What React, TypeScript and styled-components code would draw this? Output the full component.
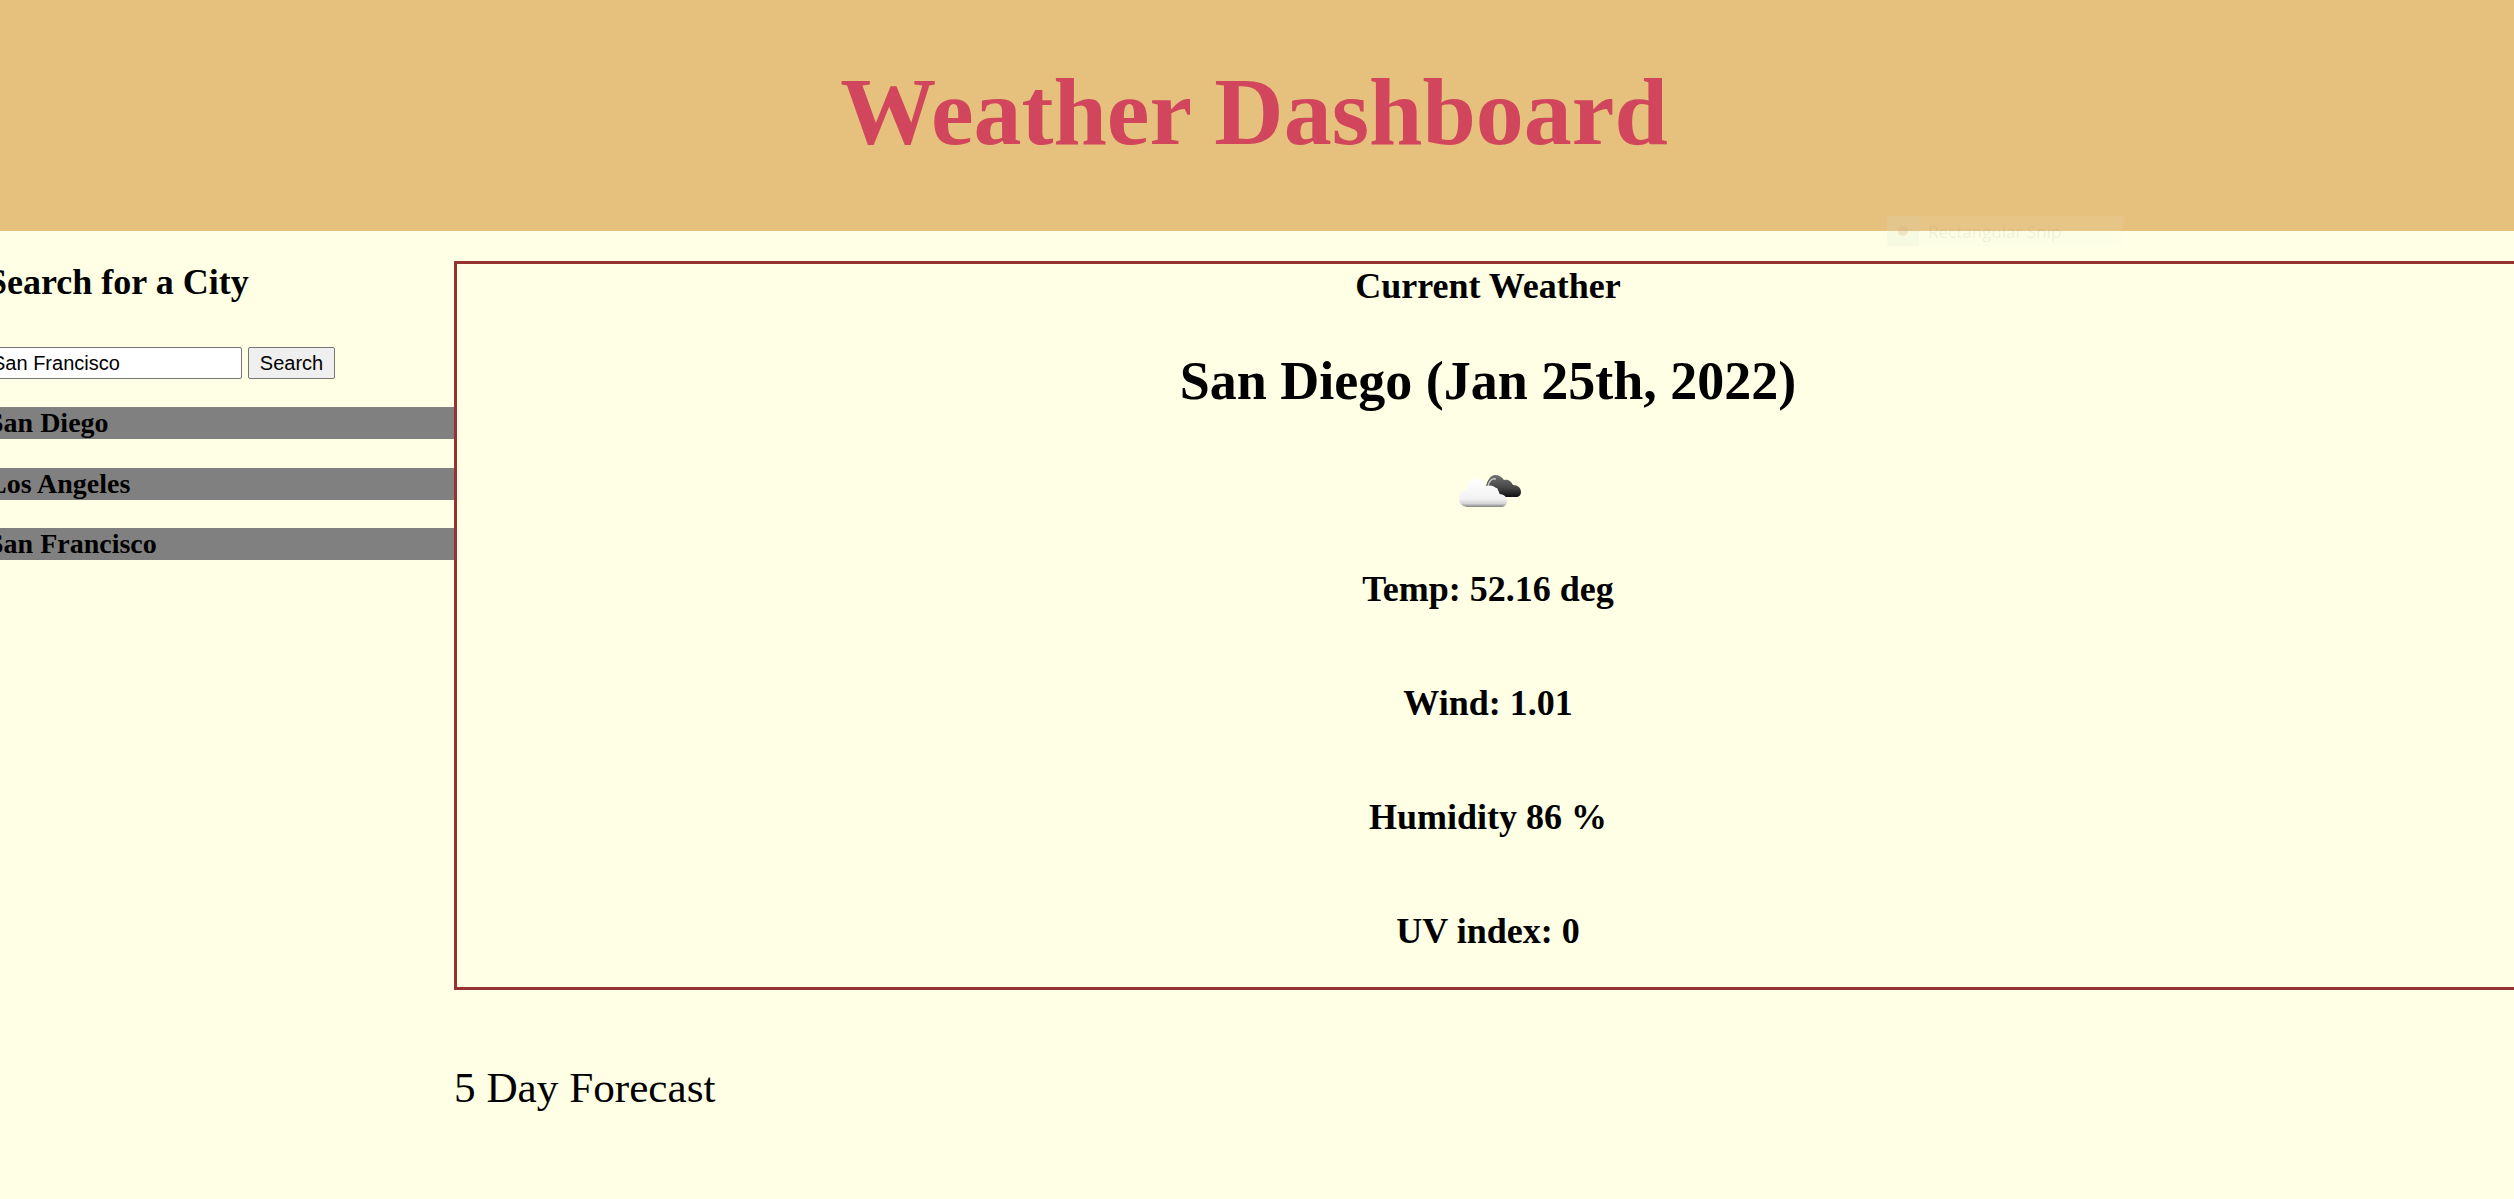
import React from "react";
import styled, { createGlobalStyle } from "styled-components";

const Global = createGlobalStyle`
  html, body { margin: 0; padding: 0; height: 100%; overflow: hidden; background: #feffe4; }
  #root { height: 100%; }
`;
const Page = styled.div`
  position: relative;
  width: 2514px;
  height: 1199px;
  overflow: hidden;
  background: #feffe4;
  font-family: "Liberation Serif", "Times New Roman", serif;
  color: #000;
`;
const Header = styled.header`
  box-sizing: border-box;
  height: 231px;
  padding: 0 6px 8px 0;
  background: #e6c17d;
  display: flex;
  align-items: center;
  justify-content: center;
`;
const Title = styled.h1`
  margin: 0;
  font-size: 96px;
  line-height: 110px;
  font-weight: 700;
  color: #d1465c;
`;
const Body = styled.div`
  display: flex;
  align-items: flex-start;
  width: 2522px;
`;
const Sidebar = styled.aside`
  flex: 0 0 454px;
  box-sizing: border-box;
  padding-top: 31px;
`;
const SearchTitle = styled.h3`
  margin: 0 0 44px -13px;
  font-size: 36px;
  line-height: 41px;
`;
const SearchRow = styled.form`
  display: flex;
  gap: 6px;
  margin: 0 0 28px -12px;
`;
const CityInput = styled.input`
  box-sizing: border-box;
  width: 254px;
  height: 32px;
  padding: 0 3px;
  border: 1px solid #767676;
  border-radius: 2px;
  background: #fff;
  font: 20px "Liberation Sans", Arial, sans-serif;
  color: #000;
  outline: none;
`;
const SearchButton = styled.button`
  box-sizing: border-box;
  width: 87px;
  height: 32px;
  padding: 0;
  border: 1px solid #767676;
  border-radius: 2px;
  background: #efefef;
  font: 20px "Liberation Sans", Arial, sans-serif;
  color: #000;
`;
const CityList = styled.div`
  display: flex;
  flex-direction: column;
  gap: 28.5px;
`;
const CityItem = styled.div`
  height: 32px;
  line-height: 32px;
  background: #808080;
  font-size: 28px;
  font-weight: 700;
  text-indent: -12px;
`;
const Main = styled.main`
  flex: 1;
  min-width: 0;
  padding-top: 30px;
`;
const CurrentCard = styled.section`
  box-sizing: border-box;
  height: 729px;
  padding-top: 2px;
  border: 3px solid #963232;
  display: flex;
  flex-direction: column;
  align-items: center;
  text-align: center;
`;
const CardTitle = styled.h3`
  margin: 0;
  font-size: 36px;
  line-height: 41px;
`;
const CityHeading = styled.h2`
  margin: 43px 0 0;
  font-size: 54px;
  line-height: 62px;
`;
const WeatherIcon = styled.svg`
  display: block;
  margin-top: 63px;
  width: 62px;
  height: 33px;
  transform: translateX(2px);
  filter: blur(0.6px);
`;
const Stat = styled.h3<{ $gap: number }>`
  margin: ${(p) => p.$gap}px 0 0;
  font-size: 36px;
  line-height: 41px;
`;
const ForecastTitle = styled.h2`
  margin: 73px 0 0;
  font-size: 43.2px;
  line-height: 50px;
  font-weight: 400;
`;
const SnipToast = styled.div`
  position: absolute;
  left: 1887px;
  top: 216px;
  width: 236px;
  height: 30px;
  display: flex;
  align-items: center;
  gap: 9px;
  background: rgba(235, 240, 240, 0.09);
  font: 17px "Open Sans", sans-serif;
  color: rgba(120, 120, 100, 0.1);
`;
const SnipIcon = styled.span`
  flex: 0 0 32px;
  height: 30px;
  display: flex;
  align-items: center;
  justify-content: center;
  background: rgba(200, 215, 190, 0.1);
  &::after {
    content: "";
    width: 10px;
    height: 10px;
    border-radius: 50%;
    background: rgba(210, 170, 110, 0.25);
  }
`;

const stats = ["Temp: 52.16 deg", "Wind: 1.01", "Humidity 86 %", "UV index: 0"];

export default function App() {
  return (
    <Page>
      <Global />
      <Header>
        <Title>Weather Dashboard</Title>
      </Header>
      <Body>
        <Sidebar>
          <SearchTitle>Search for a City</SearchTitle>
          <SearchRow onSubmit={(e) => e.preventDefault()}>
            <CityInput defaultValue="San Francisco" />
            <SearchButton type="button">Search</SearchButton>
          </SearchRow>
          <CityList>
            <CityItem>San Diego</CityItem>
            <CityItem>Los Angeles</CityItem>
            <CityItem>San Francisco</CityItem>
          </CityList>
        </Sidebar>
        <Main>
          <CurrentCard>
            <CardTitle>Current Weather</CardTitle>
            <CityHeading>San Diego (Jan 25th, 2022)</CityHeading>
            <WeatherIcon viewBox="0 0 62 33" aria-hidden="true">
              <defs>
                <linearGradient id="front" x1="0" y1="0" x2="0" y2="1">
                  <stop offset="0" stopColor="#ffffff" />
                  <stop offset="0.72" stopColor="#f2f2f2" />
                  <stop offset="0.88" stopColor="#d4d4d4" />
                  <stop offset="1" stopColor="#808080" />
                </linearGradient>
                <linearGradient id="back" x1="0" y1="0" x2="0" y2="1">
                  <stop offset="0" stopColor="#707070" />
                  <stop offset="0.6" stopColor="#444444" />
                  <stop offset="1" stopColor="#101010" />
                </linearGradient>
              </defs>
              <path
                d="M27 12C28 5 32 0 36 0C40 0 43 2 45 5C49 4 52 6 54 10C59 10 62 13 62 17C62 20 60 22 57 22H42L38 13Z"
                fill="url(#back)"
              />
              <path
                d="M29 11C30 6 33 3 37 4"
                fill="none"
                stroke="#c9c9c2"
                strokeWidth="1.5"
              />
              <path
                d="M9 32C3 32 0 28 0 24C0 19 3 15 8 15C8 9 12 4 17 4C21 4 25 6 27 11C30 10 34 10 37 13C39 15 40 17 40 19C45 19 48 22 48 26C48 30 45 32 42 32Z"
                fill="url(#front)"
              />
            </WeatherIcon>
            {stats.map((s, i) => (
              <Stat key={s} $gap={i === 0 ? 61 : 73}>
                {s}
              </Stat>
            ))}
          </CurrentCard>
          <ForecastTitle>5 Day Forecast</ForecastTitle>
        </Main>
      </Body>
      <SnipToast>
        <SnipIcon />
        Rectangular Snip
      </SnipToast>
    </Page>
  );
}
